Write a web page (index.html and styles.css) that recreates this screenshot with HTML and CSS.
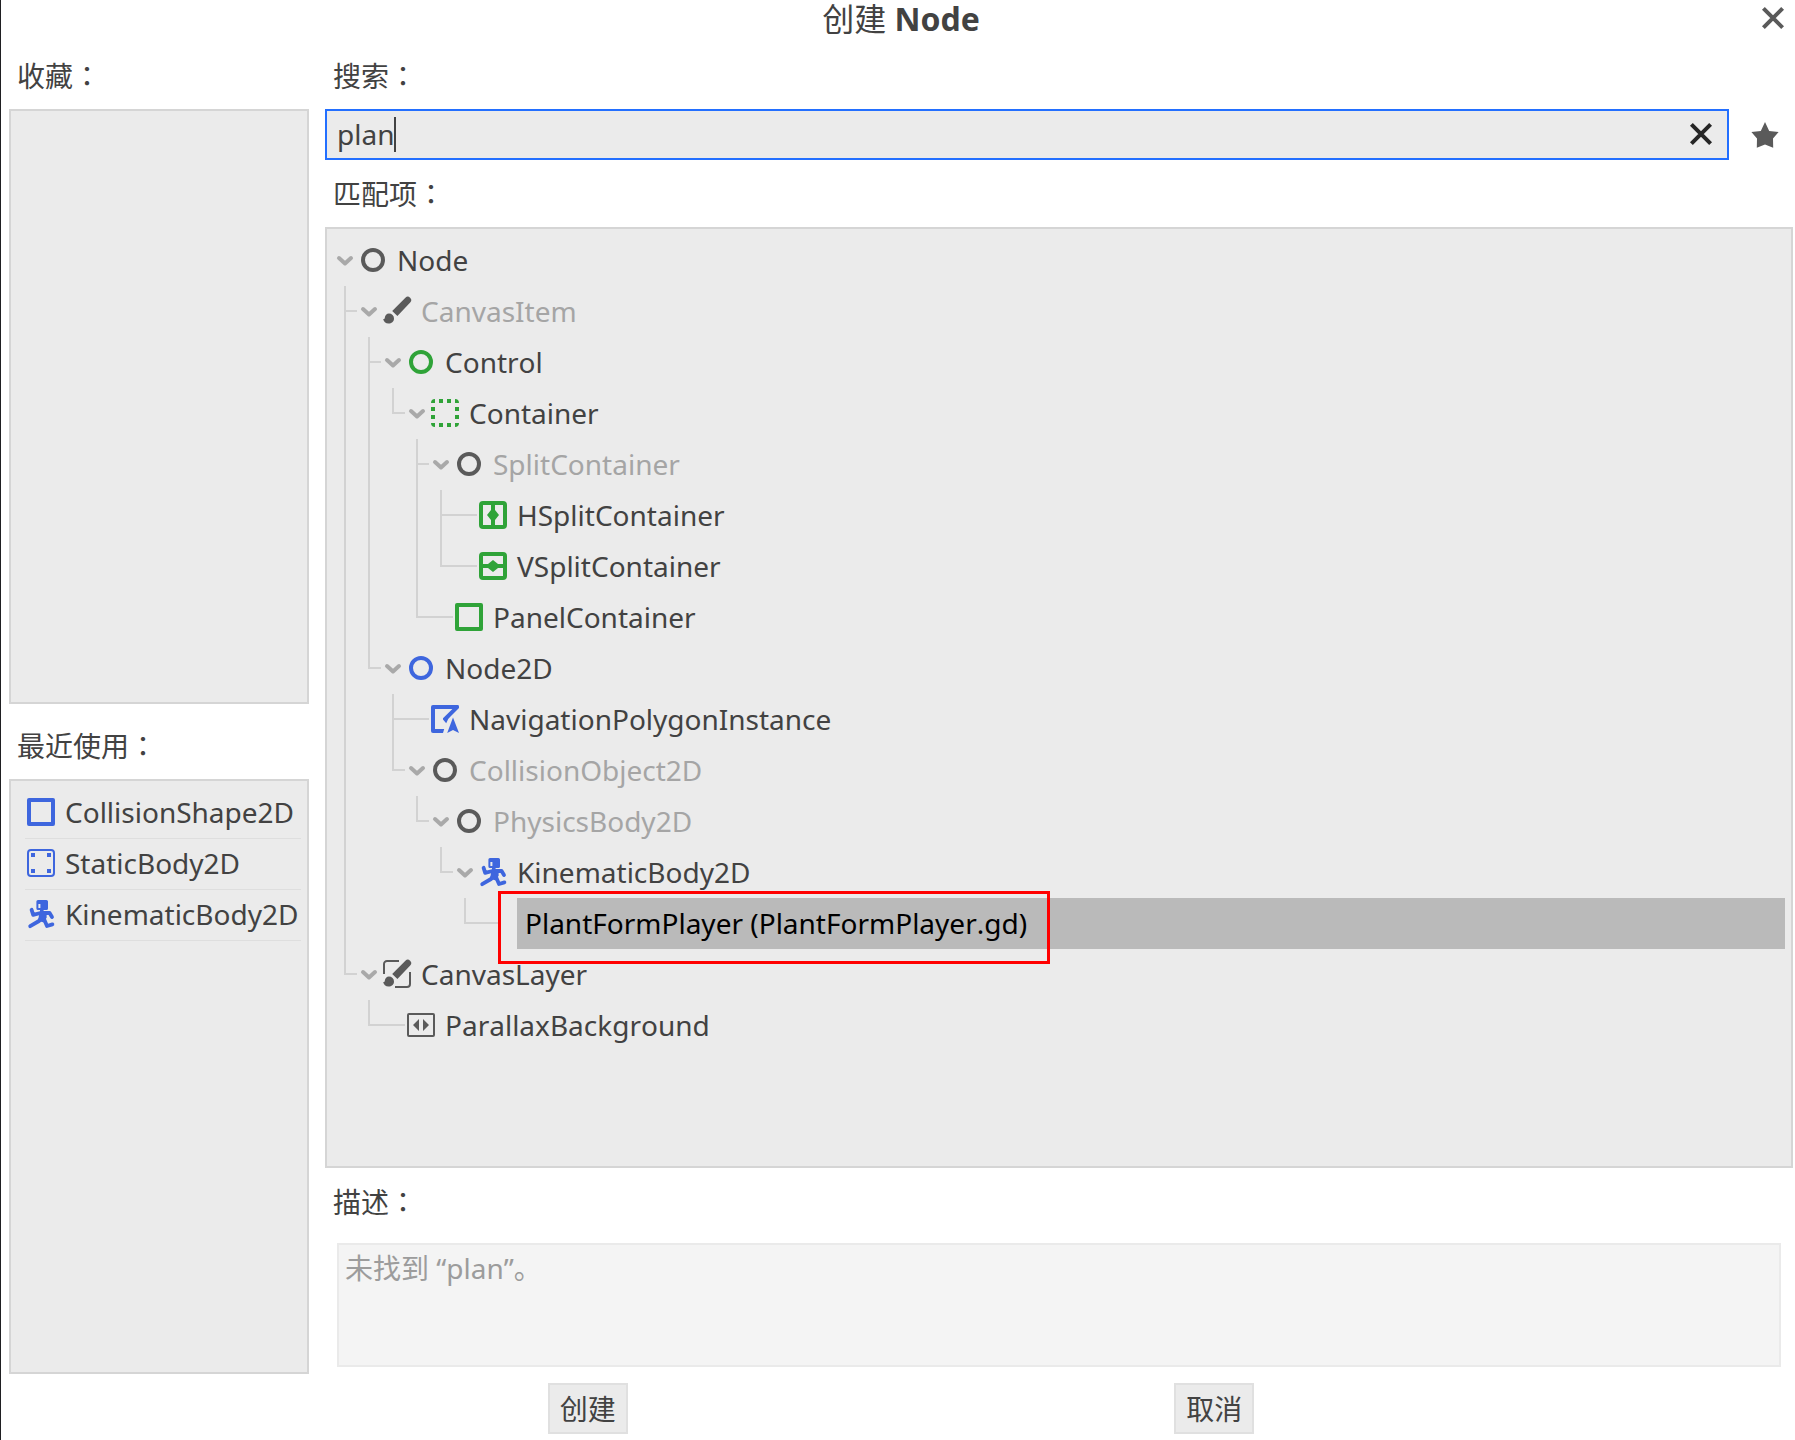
FILE: index.html
```html
<!DOCTYPE html>
<html lang="zh-CN">
<head>
<meta charset="utf-8">
<title>创建 Node</title>
<link rel="stylesheet" href="styles.css">
</head>
<body>
<svg class="sprite" aria-hidden="true">
  <symbol id="i-arrow" viewBox="0 0 24 24"><path d="M6 10l6 5.500 6-5.500" fill="none" stroke="currentColor" stroke-width="4" stroke-linecap="round" stroke-linejoin="round"/></symbol>
  <symbol id="i-close" viewBox="0 0 16 16"><path d="M3.200 3.200l9.600 9.600M12.800 3.200l-9.600 9.600" fill="none" stroke="currentColor" stroke-width="2"/></symbol>
  <symbol id="i-star" viewBox="0 0 16 16"><path d="M8 1.500L10.100 6l4.700.5L12 9.700l.1 4.700L8 12.700l-4.100 1.700.1-4.700L1.200 6.500 5.900 6z" fill="currentColor"/></symbol>
  <symbol id="i-node" viewBox="0 0 16 16"><circle cx="8" cy="8" r="5" fill="none" stroke="currentColor" stroke-width="2"/></symbol>
  <symbol id="i-brush" viewBox="0 0 16 16"><path d="M12.200 1.400a1.600 1.600 0 0 1 2.400 2.300L8.200 10.500 5.600 8z" fill="currentColor"/><path d="M4 9.300a2.500 2.500 0 0 1 2.500 2.500c0 1.600-1.300 2.500-2.700 2.500-1.500 0-2.500-1-2.700-2.300.6.100.7-.2.800-.6.200-1.200.9-2.100 2.100-2.100z" fill="currentColor"/></symbol>
  <symbol id="i-layer" viewBox="0 0 16 16"><path d="M1.500 8V3a1.500 1.500 0 0 1 1.500-1.500h6M14.500 7v6a1.500 1.500 0 0 1-1.500 1.500H7" fill="none" stroke="currentColor"/><use href="#i-brush"/></symbol>
  <symbol id="i-container" viewBox="0 0 16 16"><path d="M3 1v2H1a2 2 0 0 1 2-2zM5 1h2v2H5zM9 1h2v2H9zM13 1a2 2 0 0 1 2 2h-2zM1 5h2v2H1zM1 9h2v2H1zM13 5h2v2h-2zM13 9h2v2h-2zM1 13h2v2a2 2 0 0 1-2-2zM5 13h2v2H5zM9 13h2v2H9zM13 13h2a2 2 0 0 1-2 2z" fill="currentColor"/></symbol>
  <symbol id="i-panel" viewBox="0 0 16 16"><path fill-rule="evenodd" d="M2 1h12a1 1 0 0 1 1 1v12a1 1 0 0 1-1 1H2a1 1 0 0 1-1-1V2a1 1 0 0 1 1-1zm1 2v10h10V3z" fill="currentColor"/></symbol>
  <symbol id="i-hsplit" viewBox="0 0 16 16"><path fill-rule="evenodd" d="M3 1h10a2 2 0 0 1 2 2v10a2 2 0 0 1-2 2H3a2 2 0 0 1-2-2V3a2 2 0 0 1 2-2zm0 2v10h10V3z" fill="currentColor"/><path d="M7 3h2v2.500L11 8l-2 2.500V13H7v-2.500L5 8l2-2.500z" fill="currentColor"/></symbol>
  <symbol id="i-vsplit" viewBox="0 0 16 16"><path fill-rule="evenodd" d="M3 1h10a2 2 0 0 1 2 2v10a2 2 0 0 1-2 2H3a2 2 0 0 1-2-2V3a2 2 0 0 1 2-2zm0 2v10h10V3z" fill="currentColor"/><path d="M3 7h2.500L8 5l2.500 2H13v2h-2.500L8 11 5.500 9H3z" fill="currentColor"/></symbol>
  <symbol id="i-nav" viewBox="0 0 16 16"><path d="M2 1h12.300a.7.7 0 0 1 .7.700v.8l-4 4-1.400 1.500-1 2.100L7 8.200V7.600L11.700 3H3v10h4.600L7 15H2a1 1 0 0 1-1-1V2a1 1 0 0 1 1-1zM12 7.200l3 7.800-3-1.500L9.100 15z" fill="currentColor"/></symbol>
  <symbol id="i-static" viewBox="0 0 16 16"><rect x="1.500" y="1.500" width="13" height="13" rx="1.500" fill="none" stroke="currentColor"/><path d="M3 3h2v2H3zM11 3h2v2h-2zM3 11h2v2H3zM11 11h2v2h-2z" fill="currentColor"/></symbol>
  <symbol id="i-runner" viewBox="0 0 16 16"><path fill-rule="evenodd" d="M6.500 1h4.200a.8.8 0 0 1 .8.800v3.400a.8.8 0 0 1-.8.800H9.300v1H7.500V6h-1a.8.800 0 0 1-.8-.8V1.800a.8.8 0 0 1 .8-.8zm.2 2v2h1V3z" fill="currentColor"/><path d="M3.300 5.900l.8 2.500 3.600-.9h4.600l1.200 2M8.500 9.500L7 11.500l-4.400 2.600M9.500 10.500l1.500 3.500 2.700-.8" fill="none" stroke="currentColor" stroke-width="1.900" stroke-linecap="round" stroke-linejoin="round"/><path d="M7.200 7.500h3.600v2.300l-1.200 2.400-3.100-.7z" fill="currentColor"/></symbol>
  <symbol id="i-parallax" viewBox="0 0 16 16"><rect x="1.500" y="2.500" width="13" height="11" rx=".5" fill="none" stroke="currentColor"/><path d="M7 5v6L4 8zM9 5v6l3-3z" fill="currentColor"/></symbol>
</svg>

<main class="dialog">
  <header class="titlebar">
    <h1 class="title">创建 <b>Node</b></h1>
    <button class="icon-button close" type="button" aria-label="关闭"><svg class="icon"><use href="#i-close"/></svg></button>
  </header>

  <div class="columns">
    <aside class="side">
      <h2 class="label">收藏<span class="colon" lang="zh-TW">：</span></h2>
      <div class="panel favorites"></div>
      <h2 class="label label-recent">最近使用<span class="colon" lang="zh-TW">：</span></h2>
      <ul class="panel recent">
        <li class="recent-item"><svg class="icon blue"><use href="#i-panel"/></svg>CollisionShape2D</li>
        <li class="recent-item"><svg class="icon blue"><use href="#i-static"/></svg>StaticBody2D</li>
        <li class="recent-item"><svg class="icon blue"><use href="#i-runner"/></svg>KinematicBody2D</li>
      </ul>
    </aside>

    <section class="content">
      <label class="label" for="search">搜索<span class="colon" lang="zh-TW">：</span></label>
      <div class="search-row">
        <div class="search-box">
          <input class="search-input" id="search" type="text" value="plan" autocomplete="off" spellcheck="false">
          <span class="caret"></span>
          <button class="icon-button clear" type="button" aria-label="清除"><svg class="icon"><use href="#i-close"/></svg></button>
        </div>
        <button class="icon-button" type="button" aria-label="收藏"><svg class="icon"><use href="#i-star"/></svg></button>
      </div>

      <h2 class="label label-matches">匹配项<span class="colon" lang="zh-TW">：</span></h2>
      <div class="panel matches">
        <div class="row"><button class="toggle" type="button" aria-label="折叠"><svg class="arrow"><use href="#i-arrow"/></svg></button><svg class="icon"><use href="#i-node"/></svg><span class="name">Node</span></div>
        <ul class="branch">
          <li class="item">
            <div class="row dim"><button class="toggle" type="button" aria-label="折叠"><svg class="arrow"><use href="#i-arrow"/></svg></button><svg class="icon"><use href="#i-brush"/></svg><span class="name">CanvasItem</span></div>
            <ul class="branch">
              <li class="item">
                <div class="row"><button class="toggle" type="button" aria-label="折叠"><svg class="arrow"><use href="#i-arrow"/></svg></button><svg class="icon green"><use href="#i-node"/></svg><span class="name">Control</span></div>
                <ul class="branch">
                  <li class="item">
                    <div class="row"><button class="toggle" type="button" aria-label="折叠"><svg class="arrow"><use href="#i-arrow"/></svg></button><svg class="icon green"><use href="#i-container"/></svg><span class="name">Container</span></div>
                    <ul class="branch">
                      <li class="item">
                        <div class="row dim"><button class="toggle" type="button" aria-label="折叠"><svg class="arrow"><use href="#i-arrow"/></svg></button><svg class="icon"><use href="#i-node"/></svg><span class="name">SplitContainer</span></div>
                        <ul class="branch">
                          <li class="item leaf"><div class="row"><svg class="icon green"><use href="#i-hsplit"/></svg><span class="name">HSplitContainer</span></div></li>
                          <li class="item leaf"><div class="row"><svg class="icon green"><use href="#i-vsplit"/></svg><span class="name">VSplitContainer</span></div></li>
                        </ul>
                      </li>
                      <li class="item leaf"><div class="row"><svg class="icon green"><use href="#i-panel"/></svg><span class="name">PanelContainer</span></div></li>
                    </ul>
                  </li>
                </ul>
              </li>
              <li class="item">
                <div class="row"><button class="toggle" type="button" aria-label="折叠"><svg class="arrow"><use href="#i-arrow"/></svg></button><svg class="icon blue"><use href="#i-node"/></svg><span class="name">Node2D</span></div>
                <ul class="branch">
                  <li class="item leaf"><div class="row"><svg class="icon blue"><use href="#i-nav"/></svg><span class="name">NavigationPolygonInstance</span></div></li>
                  <li class="item">
                    <div class="row dim"><button class="toggle" type="button" aria-label="折叠"><svg class="arrow"><use href="#i-arrow"/></svg></button><svg class="icon"><use href="#i-node"/></svg><span class="name">CollisionObject2D</span></div>
                    <ul class="branch">
                      <li class="item">
                        <div class="row dim"><button class="toggle" type="button" aria-label="折叠"><svg class="arrow"><use href="#i-arrow"/></svg></button><svg class="icon"><use href="#i-node"/></svg><span class="name">PhysicsBody2D</span></div>
                        <ul class="branch">
                          <li class="item">
                            <div class="row"><button class="toggle" type="button" aria-label="折叠"><svg class="arrow"><use href="#i-arrow"/></svg></button><svg class="icon blue"><use href="#i-runner"/></svg><span class="name">KinematicBody2D</span></div>
                            <ul class="branch">
                              <li class="item leaf"><div class="row selected"><span class="name marked">PlantFormPlayer (PlantFormPlayer.gd)</span></div></li>
                            </ul>
                          </li>
                        </ul>
                      </li>
                    </ul>
                  </li>
                </ul>
              </li>
            </ul>
          </li>
          <li class="item">
            <div class="row"><button class="toggle" type="button" aria-label="折叠"><svg class="arrow"><use href="#i-arrow"/></svg></button><svg class="icon"><use href="#i-layer"/></svg><span class="name">CanvasLayer</span></div>
            <ul class="branch">
              <li class="item leaf"><div class="row"><svg class="icon"><use href="#i-parallax"/></svg><span class="name">ParallaxBackground</span></div></li>
            </ul>
          </li>
        </ul>
      </div>

      <h2 class="label label-description">描述<span class="colon" lang="zh-TW">：</span></h2>
      <p class="description">未找到 “plan”。</p>
    </section>
  </div>

  <footer class="actions">
    <button class="button" type="button">创建</button>
    <button class="button" type="button">取消</button>
  </footer>
</main>
</body>
</html>
```
FILE: styles.css
```css
:root {
  --text: #424242;
  --dim: #a5a5a5;
  --icon: #5a5a5a;
  --green: #2fa338;
  --blue: #3e66de;
  --accent: #236fff;
  --panel: #ebebeb;
  --edge: #d5d5d5;
  --guide: #d2d2d2;
  --font: "Noto Sans", "Noto Sans CJK SC", sans-serif;
}

* {
  box-sizing: border-box;
}

body {
  margin: 0;
  background: #fff;
  color: var(--text);
  font: 28px/38px var(--font);
  font-kerning: none;
}

h1, h2, p, ul {
  margin: 0;
  padding: 0;
  font-weight: 400;
  list-style: none;
}

button, input {
  font: inherit;
  color: inherit;
}

.sprite {
  display: none;
}

.dialog {
  display: flex;
  flex-direction: column;
  min-height: 100vh;
  padding: 0 2px 6px 8px;
  border-left: 1px solid #1f1f22;
}

/* Title bar */
.titlebar {
  display: grid;
  grid-template-columns: 1fr auto 1fr;
  padding-bottom: 6px;
}

.title {
  grid-column: 2;
  font-size: 32px;
  line-height: 38px;
}

.icon {
  flex: none;
  width: 32px;
  height: 32px;
  color: var(--icon);
}

.icon.green {
  color: var(--green);
}

.icon.blue {
  color: var(--blue);
}

.icon-button {
  display: flex;
  flex: none;
  padding: 0;
  border: 0;
  background: none;
}

.close {
  justify-self: end;
  padding: 2px 4px 0 0;
}

/* Columns */
.columns {
  display: grid;
  flex: 1;
  grid-template-columns: 300px 1fr;
  gap: 16px;
}

.side {
  display: grid;
  grid-template-rows: auto minmax(0, 1fr) auto minmax(0, 1fr);
}

.content {
  display: flex;
  flex-direction: column;
  min-width: 0;
}

.label {
  display: block;
  padding: 13px 8px 14px;
  font-size: 28px;
}

.label-matches {
  padding: 15px 8px 14px;
}

.label-recent {
  padding: 23px 8px 14px;
}

.label-description {
  padding: 15px 8px 22px;
}

/* Full-width colon, centred in its em box */
.colon {
  font-family: "Noto Sans CJK TC", sans-serif;
  line-height: 0;
}

.panel {
  border: 2px solid var(--edge);
  background: var(--panel);
}

.recent {
  padding: 6px 6px 6px 14px;
}

.recent-item {
  display: flex;
  align-items: center;
  gap: 8px;
  height: 51px;
  padding-bottom: 1px;
  white-space: nowrap;
  box-shadow: 0 1px #dedede;
}

/* Search */
.search-row {
  display: flex;
  align-items: center;
  gap: 20px;
  padding-right: 12px;
}

.search-box {
  position: relative;
  display: flex;
  flex: 1;
  align-items: center;
  height: 51px;
  padding: 0 10px 1px;
  border: 2px solid var(--accent);
  background: var(--panel);
}

.search-input {
  flex: 1;
  min-width: 0;
  height: 38px;
  padding: 0;
  border: 0;
  outline: 0;
  background: none;
}

.caret {
  position: absolute;
  top: 6px;
  left: 67px;
  width: 2px;
  height: 35px;
  background: var(--text);
}

.clear .icon {
  color: #262626;
}

/* Result tree */
.matches {
  flex: 1;
  padding: 6px;
}

.row {
  display: flex;
  align-items: center;
  height: 51px;
  padding-bottom: 1px;
  white-space: nowrap;
}

.dim {
  color: var(--dim);
}

.toggle {
  display: flex;
  padding: 0;
  border: 0;
  background: none;
  color: #a9a9a9;
}

.arrow {
  width: 24px;
  height: 24px;
}

.name {
  padding: 0 8px;
}

.branch {
  margin-left: 11px;
}

/* Guide lines: a vertical line down the branch and a stub to each row */
.item {
  --stub: 13px;
  --drop: 100%;
  padding-left: 13px;
  background:
    linear-gradient(var(--guide), var(--guide)) 0 0 / 2px var(--drop) no-repeat,
    linear-gradient(var(--guide), var(--guide)) 0 24px / var(--stub) 2px no-repeat;
}

.item:last-child {
  --drop: 26px;
}

.leaf {
  --stub: 37px;
  padding-left: 37px;
}

.selected {
  margin-left: 16px;
  background: #bababa;
  color: #000;
}

.marked {
  position: relative;
}

.marked::after {
  content: "";
  position: absolute;
  inset: -13px -15px -22px -19px;
  border: 3px solid #f00;
}

/* Description */
.description {
  min-height: 124px;
  margin: 0 12px 7px;
  padding: 4px 6px;
  border: 2px solid #eaeaea;
  background: #f4f4f4;
  color: #9c9c9c;
}

/* Actions */
.actions {
  display: flex;
  justify-content: space-evenly;
  gap: 8px;
  padding-top: 9px;
}

.button {
  height: 51px;
  padding: 0 10px;
  border: 2px solid #e0e0e0;
  background: var(--panel);
}
```
